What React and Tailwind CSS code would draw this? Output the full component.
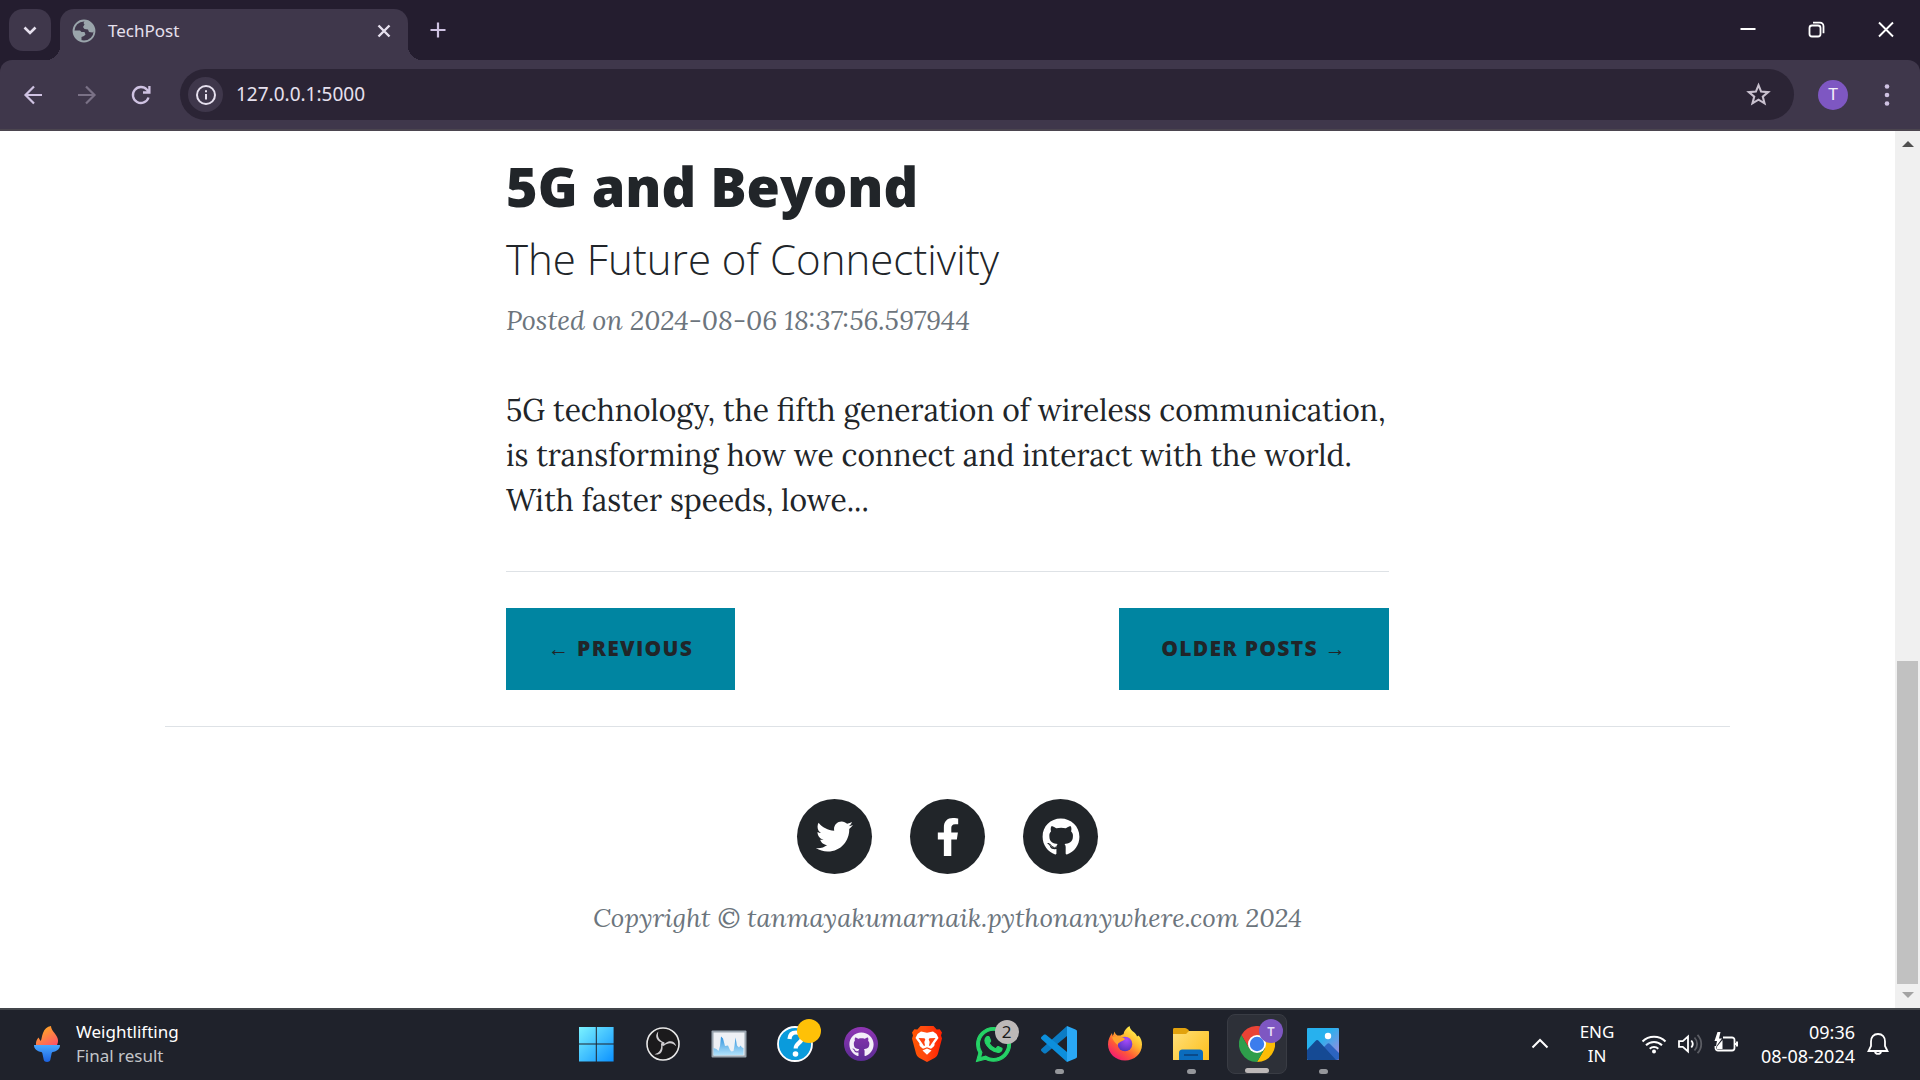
import React from "react";
import { FaTwitter, FaFacebookF, FaGithub, FaWhatsapp } from "react-icons/fa";

const ICON = "h-6 w-6";

function TabStrip() {
  return (
    <header className="flex h-[60px] shrink-0 bg-[#241d2f] pl-[9px] text-[#e6e0ee]">
      <button aria-label="Search tabs" className="mt-[9px] grid h-[42px] w-[42px] place-items-center rounded-[14px] bg-[#3f374b]">
        <svg viewBox="0 0 24 24" className={ICON} fill="none" stroke="currentColor" strokeWidth="2.6"><path d="M6.5 9.5 12 15l5.500-5.500" /></svg>
      </button>
      <div className="relative ml-[9px] mt-[9px] flex w-[348px] items-center rounded-t-[14px] bg-[#3f374b] pb-2 pl-3 pr-3">
        <span className="absolute -left-[14px] bottom-0 h-[14px] w-[14px] bg-[radial-gradient(circle_at_0_0,transparent_14px,#3f374b_14px)]" />
        <span className="absolute -right-[14px] bottom-0 h-[14px] w-[14px] bg-[radial-gradient(circle_at_100%_0,transparent_14px,#3f374b_14px)]" />
        <svg viewBox="0 0 24 24" className={ICON}>
          <circle cx="12" cy="12" r="10.500" fill="none" stroke="#9aa5ab" strokeWidth="1.800" />
          <path fill="#9aa5ab" d="M13 1.500C19 2 22.500 6.500 22.500 12l-2 1.500-3.500-.500-1-2.500-3.500-.500-1.500-2 1.500-2.500-1-1.500z" />
          <path fill="#9aa5ab" d="M1.500 11.500H8l1.500 1.500h3l1 2.500-1.500 1.500-2.500 1v3.500l-.500 1C4.500 21 1 16.500 1.500 11.500z" />
        </svg>
        <span className="ml-3 flex-1 text-[17px]">TechPost</span>
        <button aria-label="Close tab" className="grid h-6 w-6 place-items-center">
          <svg viewBox="0 0 24 24" className={ICON} fill="none" stroke="currentColor" strokeWidth="2.400"><path d="m6.500 6.500 11 11m0-11-11 11" /></svg>
        </button>
      </div>
      <button aria-label="New tab" className="ml-[18px] mt-[18px] grid h-6 w-6 place-items-center text-[#cfc2e2]">
        <svg viewBox="0 0 24 24" className={ICON} fill="none" stroke="currentColor" strokeWidth="2.200"><path d="M12 4.500v15M4.500 12h15" /></svg>
      </button>
      <div className="ml-auto flex text-white">
        <button aria-label="Minimize" className="grid w-[69px] place-items-center">
          <svg viewBox="0 0 24 24" className={ICON} fill="none" stroke="currentColor" strokeWidth="2"><path d="M4.500 11h15" /></svg>
        </button>
        <button aria-label="Restore" className="grid w-[69px] place-items-center">
          <svg viewBox="0 0 24 24" className={ICON} fill="none" stroke="currentColor" strokeWidth="1.800"><rect x="4.500" y="7.500" width="11" height="11" rx="2.500" /><path d="M8 4.700h7a3.500 3.500 0 0 1 3.500 3.500v7" /></svg>
        </button>
        <button aria-label="Close" className="grid w-[69px] place-items-center">
          <svg viewBox="0 0 24 24" className={ICON} fill="none" stroke="currentColor" strokeWidth="1.900"><path d="m5 4.500 14 14m0-14-14 14" /></svg>
        </button>
      </div>
    </header>
  );
}

function Toolbar() {
  return (
    <div className="shrink-0 bg-[#241d2f]">
      <div className="flex h-[71px] items-center rounded-t-[12px] border-b-2 border-[#4b454f] bg-[#3f374b] pl-[21px] pr-[21px] text-[#cfc2e2]">
        <nav className="flex gap-[30px]">
          <button aria-label="Back"><svg viewBox="0 0 24 24" className={ICON} fill="none" stroke="currentColor" strokeWidth="2.200"><path d="M21 12H5m8-8.500L4.500 12l8.500 8.500" /></svg></button>
          <button aria-label="Forward" className="text-[#7a7186]"><svg viewBox="0 0 24 24" className={ICON} fill="none" stroke="currentColor" strokeWidth="2.200"><path d="M3 12h16m-8-8.500 8.500 8.500-8.500 8.500" /></svg></button>
          <button aria-label="Reload"><svg viewBox="0 0 24 24" className={ICON} fill="none" stroke="currentColor" strokeWidth="2.300"><path d="M19.500 14.500A8 8 0 1 1 18 6.800l2 2.400M20.400 3v6.500H14" /></svg></button>
        </nav>
        <div className="ml-[27px] flex h-[51px] flex-1 items-center rounded-full bg-[#2b2435] pl-2 pr-[22px]">
          <button aria-label="Site information" className="grid h-[35px] w-[35px] place-items-center rounded-full bg-[#3f374b] text-[#e6e0ee]">
            <svg viewBox="0 0 24 24" className={ICON} fill="none" stroke="currentColor" strokeWidth="2"><circle cx="12" cy="12" r="9" /><path d="M12 11v5.500M12 7.200v2" /></svg>
          </button>
          <input aria-label="Address" defaultValue="127.0.0.1:5000" className="ml-[13px] min-w-0 flex-1 bg-transparent text-[19px] text-[#e6e0ee] outline-none" />
          <button aria-label="Bookmark this page" className="text-[#c9c1cf]">
            <svg viewBox="0 0 26 26" className="h-[27px] w-[27px]" fill="none" stroke="currentColor" strokeWidth="2"><path d="m13 4 2.500 6.200 6.800.500-5.200 4.300 1.700 6.500L13 18l-5.800 3.500 1.700-6.500-5.200-4.300 6.800-.500z" /></svg>
          </button>
        </div>
        <button aria-label="Profile" className="ml-6 grid h-[30px] w-[30px] place-items-center rounded-full bg-[#7e57c2] font-[Roboto] text-[17px] text-[#f3effa]">T</button>
        <button aria-label="Menu" className="ml-[27px]"><svg viewBox="0 0 24 24" className={ICON} fill="currentColor"><circle cx="12" cy="3.500" r="2.300" /><circle cx="12" cy="12" r="2.300" /><circle cx="12" cy="20.500" r="2.300" /></svg></button>
      </div>
    </div>
  );
}

function Social({ label, children }) {
  return (
    <a href="#" aria-label={label} className="grid h-[75px] w-[75px] place-items-center rounded-full bg-[#212529] text-white">
      {children}
    </a>
  );
}

function Page() {
  return (
    <main className="flex-1 overflow-hidden bg-white pt-[23px] font-['Lora','Liberation_Serif',serif] text-[#212529]">
      <div className="mx-auto w-[883px] max-w-full">
        <article>
          <h2 className="font-['Open_Sans',sans-serif] text-[54px] font-extrabold leading-[65px]">5G and Beyond</h2>
          <h3 className="mt-[15px] font-['Open_Sans',sans-serif] text-[42px] font-light leading-[50px]">The Future of Connectivity</h3>
          <p className="mt-4 text-[27px] italic leading-[40px] text-[#6c757d]">Posted on 2024-08-06 18:37:56.597944</p>
          <p className="mt-[48px] text-[30px] leading-[45px]">
            5G technology, the fifth generation of wireless communication, is transforming how we connect and interact with the world. With faster speeds, lowe...
          </p>
        </article>
        <hr className="mt-[48px] border-[#dee2e6]" />
        <div className="mt-9 flex justify-between font-['Open_Sans',sans-serif] text-[21px] font-extrabold uppercase tracking-[0.0625em]">
          <a href="#" className="flex h-[82px] items-center bg-[#0085a1] px-[42px]">← Previous</a>
          <a href="#" className="flex h-[82px] items-center bg-[#0085a1] px-[42px]">Older Posts →</a>
        </div>
      </div>
      <hr className="mx-[165px] mt-9 border-[#dee2e6]" />
      <footer className="mt-[72px]">
        <div className="flex justify-center gap-[38px]">
          <Social label="Twitter"><FaTwitter className="h-[37px] w-[37px]" /></Social>
          <Social label="Facebook"><FaFacebookF className="h-[38px] w-[38px]" /></Social>
          <Social label="GitHub"><FaGithub className="h-[38px] w-[38px]" /></Social>
        </div>
        <p className="mt-6 text-center text-[26px] italic leading-[40px] text-[#6c757d]">Copyright © tanmayakumarnaik.pythonanywhere.com 2024</p>
      </footer>
    </main>
  );
}

function Scrollbar() {
  return (
    <div aria-hidden="true" className="flex w-[25px] shrink-0 flex-col items-center bg-[#f0f0f0] py-[10px]">
      <svg viewBox="0 0 12 6" className="h-[6px] w-3 shrink-0" fill="#505050"><path d="M0 6 6 0l6 6z" /></svg>
      <div className="mb-2 mt-2 flex w-[21px] flex-1 flex-col">
        <div className="grow-[506]" />
        <div className="grow-[323] bg-[#c1c1c1]" />
      </div>
      <svg viewBox="0 0 12 6" className="h-[6px] w-3 shrink-0" fill="#a3a3a3"><path d="m0 0 6 6 6-6z" /></svg>
    </div>
  );
}

const S = "h-9 w-9";

function StartIcon() {
  return (
    <svg viewBox="0 0 36 36" className={S}>
      <defs><linearGradient id="win" x1="0" y1="0" x2="35" y2="36" gradientUnits="userSpaceOnUse"><stop stopColor="#7df4ff" /><stop offset="1" stopColor="#0a90ff" /></linearGradient></defs>
      <path fill="url(#win)" d="M0 1h16.800v16.500H0zM17.800 1H34.600v16.500H17.800zM0 18.500h16.800V35.500H0zM17.800 18.500H34.600V35.500H17.800z" />
    </svg>
  );
}

function ObsIcon() {
  return (
    <svg viewBox="0 0 36 36" className={S}>
      <circle cx="18" cy="18" r="16" fill="#1b1a1c" stroke="#e8e8e8" strokeWidth="1.600" />
      {[0, 120, 240].map((a) => (
        <path key={a} transform={`rotate(${a} 18 18)`} fill="#cfcdd0" d="M13.300 5.500C10 9 10.300 13.800 16.500 16.600l1.300 2.600 1.800-2.700C14 14.500 12 11 13.300 5.500z" />
      ))}
    </svg>
  );
}

function MonitorIcon() {
  return (
    <svg viewBox="0 0 36 36" className={S}>
      <defs><linearGradient id="mon" x1="0" y1="8" x2="0" y2="30" gradientUnits="userSpaceOnUse"><stop stopColor="#1c86d8" /><stop offset="1" stopColor="#b8e6fc" /></linearGradient></defs>
      <rect x=".5" y="4.500" width="35" height="27" rx="1" fill="#98a3ad" />
      <rect x="2.500" y="6.500" width="31" height="23" fill="#eef1f5" />
      <path fill="url(#mon)" d="M2.500 29.500V22l3 1 2 2 1.500-5 1-9.500 2 2 2 7.500 3-.500 2 4.500 1.500 1.500 2-.500 1-5.500 1-8 1.500 8 2 2 1.500-2 1.500 2 1.500.500v7z" />
    </svg>
  );
}

function HelpIcon() {
  return (
    <span className="relative">
      <svg viewBox="0 0 36 36" className={S}>
        <circle cx="18" cy="18" r="17" fill="#0a9bdc" stroke="#fff" strokeWidth="1.800" />
        <path d="M12.500 13c.300-4.500 3-6.500 6.500-6.500 4 0 6 2.500 6 5.500 0 5-6.300 5-6.300 10.500" fill="none" stroke="#fff" strokeWidth="4.200" />
        <circle cx="18.500" cy="28" r="2.800" fill="#fff" />
      </svg>
      <span className="absolute -right-2 -top-[7px] h-6 w-6 rounded-full bg-[#ffc107]" />
    </span>
  );
}

function GithubIcon() {
  return (
    <span className="grid h-[34px] w-[34px] place-items-center rounded-full bg-linear-to-b from-[#9035b4] to-[#5a2b93]">
      <FaGithub className="h-[25px] w-[25px] text-[#f3eef8]" />
    </span>
  );
}

function BraveIcon() {
  return (
    <svg viewBox="0 0 36 36" className={S}>
      <defs><linearGradient id="brave" x1="3" y1="0" x2="33" y2="0" gradientUnits="userSpaceOnUse"><stop stopColor="#ff5500" /><stop offset=".45" stopColor="#ff4a10" /><stop offset="1" stopColor="#ff2000" /></linearGradient></defs>
      <path fill="url(#brave)" d="M11.500 0h13l3.200 3.500 3-.300 2.300 3.300-1 3 1 3-4 15c-.500 2-1.500 3-3 4.200L18 36l-8-4.300c-1.500-1.200-2.500-2.200-3-4.200L3 12.500l1-3-1-3 2.300-3.300 3 .300z" />
      <path fill="#fff" d="m12 5.500 6 1.200 6-1.200L27.500 8l2 4-4 5.500c.300 1.500-.200 2.500-1 3.200L22 22.800l-4-1.600-4 1.600-2.500-2.100c-.800-.700-1.300-1.700-1-3.200L6.500 12l2-4zM13.500 24.500 18 22.500l4.500 2L18 28.800z" />
      <path fill="#ff4310" d="m9.500 12 6 .200.800 1.300-1 2.500.700 3.500-1 .500-2-3zM26.500 12l-6 .200-.800 1.300 1 2.500-.700 3.500 1 .500 2-3z" />
    </svg>
  );
}

function WhatsappIcon() {
  return (
    <span className="relative">
      <FaWhatsapp className="h-[39px] w-[39px] text-[#25d366]" stroke="currentColor" strokeWidth="14" />
      <span className="absolute -right-[6px] -top-[5px] grid h-6 w-6 place-items-center rounded-full bg-[#bdb9b8] text-[17px] leading-none text-[#1b1b1b]">2</span>
    </span>
  );
}

function CodeIcon() {
  return (
    <svg viewBox="0 0 36 36" className={S}>
      <path fill="#0b7cc4" d="M26 0v10L5 27.200c-.700.500-1.500.500-2.200 0L.6 25.200c-.800-.700-.800-1.800 0-2.500z" />
      <path fill="#0c8fdc" d="M26 36V26L5 8.800c-.700-.500-1.500-.500-2.200 0L.6 10.800c-.800.700-.800 1.800 0 2.500z" />
      <path fill="#2aa8f5" d="m26 0 8.500 3.500c1 .500 1.500 1 1.500 2v25c0 1-.500 1.500-1.500 2L26 36z" />
    </svg>
  );
}

function FirefoxIcon() {
  return (
    <svg viewBox="0 0 36 36" className={S}>
      <defs>
        <linearGradient id="fox" x1="30" y1="4" x2="8" y2="34" gradientUnits="userSpaceOnUse"><stop stopColor="#fff44f" /><stop offset=".35" stopColor="#ffb52e" /><stop offset=".65" stopColor="#ff5a36" /><stop offset="1" stopColor="#f0147a" /></linearGradient>
        <radialGradient id="foxc" cx=".6" cy=".2" r=".9"><stop stopColor="#a84cff" /><stop offset="1" stopColor="#4a2fb5" /></radialGradient>
      </defs>
      <path fill="url(#fox)" d="M22.500 0c.500 3 2 4.300 4.500 6.300 1.500 1.200 2.500 2.500 3 4.200l1.500-1C34 12 35 15 35 18.500c0 9.500-7.700 16-17 16s-17-7-17-16C1 14 2.500 10.500 5 7l.500 3 1-1.500L7.500 5.500c.500 2 1.500 3 3 4h3l2-1 1-.300C17 5 19 2 22.500 0z" />
      <circle cx="18" cy="18" r="7.300" fill="url(#foxc)" />
      <path fill="#ffa22e" d="M5 11.500c3-1.500 5.500-1.500 8-.500 2.500 0 4 .700 5 2-1 1.500-2.500 1.800-4 2.500-1 1-3 1-3 3.500C8.500 17.500 6.500 15 5 11.500z" />
    </svg>
  );
}

function FolderIcon() {
  return (
    <svg viewBox="0 0 36 36" className={S}>
      <defs><linearGradient id="fold" x1="0" y1="4" x2="36" y2="34" gradientUnits="userSpaceOnUse"><stop stopColor="#ffe07a" /><stop offset="1" stopColor="#fdbf1c" /></linearGradient></defs>
      <path fill="#e2a20d" d="M0 3.500c0-1 .500-1.500 1.500-1.500H12c1 0 2 .500 3 1.500L17 6v4H0z" />
      <path fill="url(#fold)" d="M0 8h13l3-3h19c.700 0 1 .300 1 1v28H0z" />
      <path fill="#0a6cbd" d="M6 34V27c0-2.300 1-3.500 3.500-3.500h17C29 23.500 30 24.700 30 27v7z" />
      <path stroke="#0b3f78" strokeWidth="1.500" d="M11 29h14" />
    </svg>
  );
}

function ChromeIcon() {
  return (
    <span className="relative">
      <svg viewBox="0 0 36 36" className={S}>
        <path fill="#ea4335" d="M2.400 9A18 18 0 0 1 33.600 9H18v9l-7.800 4.500z" />
        <path fill="#fbbc05" d="M33.600 9A18 18 0 0 1 18 36l7.800-13.500L18 9z" />
        <path fill="#2e9e4b" d="M18 36A18 18 0 0 1 2.400 9l7.800 13.500L18 27l7.800-4.500z" />
        <circle cx="18" cy="18" r="9" fill="#fff" />
        <circle cx="18" cy="18" r="7.200" fill="#3b7ded" />
      </svg>
      <span className="absolute -right-2 -top-[7px] grid h-6 w-6 place-items-center rounded-full bg-[#7e57c2] text-[13px] font-semibold leading-none text-[#e6dcf5]">T</span>
    </span>
  );
}

function PhotosIcon() {
  return (
    <svg viewBox="0 0 36 36" className={S}>
      <defs><linearGradient id="sky" x1="0" y1="0" x2="36" y2="36" gradientUnits="userSpaceOnUse"><stop offset=".4" stopColor="#27b1ee" /><stop offset=".9" stopColor="#a588dc" /></linearGradient></defs>
      <rect x="2" y="2" width="32" height="32" rx="1" fill="url(#sky)" />
      <circle cx="23" cy="10" r="3.200" fill="#fff" />
      <path fill="#2c64c0" d="m18 22 4-4c1-1 2-1 3 0l9 9v6l-2 1H18z" />
      <path fill="#154a94" d="m2 24 8.500-9c1-1.200 2.200-1.200 3.300 0L31 34H3l-1-1z" />
    </svg>
  );
}

const APPS = [
  { name: "Start", Icon: StartIcon },
  { name: "OBS Studio", Icon: ObsIcon },
  { name: "Resource Monitor", Icon: MonitorIcon },
  { name: "Get Help", Icon: HelpIcon },
  { name: "GitHub Desktop", Icon: GithubIcon },
  { name: "Brave", Icon: BraveIcon },
  { name: "WhatsApp", Icon: WhatsappIcon },
  { name: "Visual Studio Code", Icon: CodeIcon, running: true },
  { name: "Firefox", Icon: FirefoxIcon },
  { name: "File Explorer", Icon: FolderIcon, running: true },
  { name: "Chrome", Icon: ChromeIcon, active: true },
  { name: "Photos", Icon: PhotosIcon, running: true },
];

function Taskbar() {
  return (
    <footer className="grid h-[72px] shrink-0 grid-cols-[1fr_auto_1fr] items-center border-t-2 border-[#43464b] bg-[#1f222b] pb-[2px] text-[17px] leading-6 text-white">
      <button className="flex items-center pl-[33px] text-left">
        <svg viewBox="0 0 28 36" className="h-9 w-7">
          <defs>
            <linearGradient id="flame" x1="8" y1="0" x2="20" y2="20" gradientUnits="userSpaceOnUse"><stop stopColor="#ffb01f" /><stop offset="1" stopColor="#ff5566" /></linearGradient>
            <linearGradient id="bowl" x1="0" y1="19" x2="0" y2="36" gradientUnits="userSpaceOnUse"><stop stopColor="#4aa8ff" /><stop offset="1" stopColor="#1b62e0" /></linearGradient>
          </defs>
          <path fill="url(#flame)" d="M3 19c-.300-3 .500-5 2.500-7.500L7.500 15C9 13 8.500 10.500 10 7 11.500 3 14 .500 18 0c0 5 6.500 8.500 7 14 .100 2-.200 3.500-1 5z" />
          <path fill="url(#bowl)" d="M1 19h26c0 4-3 6.500-7.500 7l-.800 1L17.300 34c-.500 2.500-6 2.500-6.500 0L9.300 27l-.800-1C4 25.500 1 23 1 19z" />
        </svg>
        <span className="ml-[15px]"><span className="block">Weightlifting</span><span className="block text-[#c3c5c9]">Final result</span></span>
      </button>
      <nav className="flex">
        {APPS.map(({ name, Icon, running, active }) => (
          <button key={name} aria-label={name} className="grid h-[68px] w-[66px] place-items-center">
            <span className={active ? "relative grid h-[60px] w-[60px] place-items-center rounded-lg border border-[#393c44] bg-[#2d3038] leading-none" : "relative grid h-[60px] w-[60px] place-items-center leading-none"}>
              <Icon />
              {running && <span className="absolute bottom-0 h-[5px] w-[9px] rounded-full bg-[#95979b]" />}
              {active && <span className="absolute bottom-0 h-[5px] w-6 rounded-full bg-[#bdb8b8]" />}
            </span>
          </button>
        ))}
      </nav>
      <div className="flex items-center justify-end pr-[30px]">
        <button aria-label="Show hidden icons"><svg viewBox="0 0 24 24" className={ICON} fill="none" stroke="currentColor" strokeWidth="2"><path d="m4.500 15.500 7.500-7.500 7.500 7.500" /></svg></button>
        <button className="ml-[27px] w-[36px] text-center">ENG<br />IN</button>
        <button aria-label="Network, sound and battery" className="ml-[26px] flex gap-[10px]">
          <svg viewBox="0 0 26 24" className="h-6 w-[26px]" fill="none" stroke="currentColor" strokeWidth="2"><path d="M1.500 9.500a16.500 16.500 0 0 1 23 0M5 13.200a11.500 11.500 0 0 1 16 0M8.700 16.800a6.200 6.200 0 0 1 8.600 0" /><circle cx="13" cy="19.500" r="2" fill="currentColor" stroke="none" /></svg>
          <svg viewBox="0 0 26 24" className="h-6 w-[26px]" fill="none" stroke="currentColor" strokeWidth="1.800"><path d="M2 9.200h3.800L11 4.500v15l-5.200-4.700H2z" /><path d="M14.300 8.500c1.700 2 1.700 5 0 7" /><path d="M17.500 5.500c3.500 3.700 3.500 9.300 0 13M20.500 2.800c5 5.300 5 13.100 0 18.400" stroke="#5b5d64" /></svg>
          <svg viewBox="0 0 26 24" className="h-6 w-[26px]" fill="none" stroke="currentColor" strokeWidth="1.800"><path d="M10 5.500h9a2.500 2.500 0 0 1 2.500 2.500v8a2.500 2.500 0 0 1-2.500 2.500H5A2.500 2.500 0 0 1 2.500 16v-2M22 12h2.500" /><path d="M24 9.500v5" strokeWidth="2" /><path fill="currentColor" stroke="none" d="M4.500 0 1.500 9H4L2.800 15 9 6.500H6L7.500 0zM4 17V14.500L9.500 8v9z" /></svg>
        </button>
        <button className="ml-[22px] text-right text-[18px]"><span className="block">09:36</span><span className="block">08-08-2024</span></button>
        <button aria-label="Notifications" className="ml-[11px]"><svg viewBox="0 0 24 24" className={ICON} fill="none" stroke="currentColor" strokeWidth="1.800"><path d="M12 2c-4.500 0-7 3.300-7 7.500v4.500l-2.500 5h19L19 14V9.500C19 5.300 16.500 2 12 2zM9 19.500c.500 3.200 5.500 3.200 6 0" /></svg></button>
      </div>
    </footer>
  );
}

export default function App() {
  return (
    <div className="flex h-screen flex-col overflow-hidden font-['Segoe_UI','Noto_Sans',sans-serif]">
      <TabStrip />
      <Toolbar />
      <div className="flex min-h-0 flex-1">
        <Page />
        <Scrollbar />
      </div>
      <Taskbar />
    </div>
  );
}
